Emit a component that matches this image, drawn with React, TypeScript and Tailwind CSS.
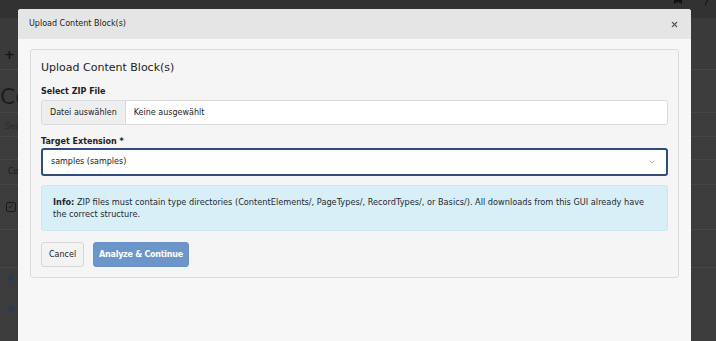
import { ChevronDown, X } from 'lucide-react';

function BackgroundPage() {
  return (
    <div className="flex h-full w-full flex-col bg-[#3c3c3c] text-[#1f1f1f]">
      <div className="flex h-[18px] shrink-0 items-start justify-end gap-[22px] bg-[#323232] pr-[8px]">
        <svg width="8" height="4" viewBox="0 0 8 4">
          <path d="M0 0h8v4L4 2 0 4z" fill="#111" />
        </svg>
        <svg width="4" height="5" viewBox="0 0 4 5">
          <path d="M3.5 0 1 5" stroke="#111" strokeWidth="1" />
        </svg>
      </div>
      <div className="flex h-[52px] shrink-0 items-center border-b border-[#474747] bg-[#3a3a3a] pl-[4px] pt-[22px]">
        <span className="text-[13px] font-bold text-[#151515]">+ A</span>
      </div>
      <div className="flex h-[43px] shrink-0 items-end border-b border-[#464646] pb-[2px]">
        <span className="text-[22px] leading-[26px] text-[#1c1c1c]">Co</span>
      </div>
      <div className="flex h-[24px] shrink-0 items-center border-b border-[#464646] pl-[5px] pt-[4px]">
        <span className="text-[8px] text-[#2a2a2a]">Sea</span>
      </div>
      <div className="h-[23px] shrink-0 border-b border-[#464646]" />
      <div className="flex h-[25px] shrink-0 items-center border-b border-[#464646] pl-[8px]">
        <span className="text-[8px] text-[#1c1c1c]">Co</span>
      </div>
      <div className="flex h-[45px] shrink-0 items-center border-b border-[#464646] pl-[6px]">
        <span className="flex h-[10px] w-[10px] items-center justify-center rounded-[2px] border border-[#1a1a1a] text-[7px] leading-none text-[#1a1a1a]">✓</span>
      </div>
      <div className="h-[38px] shrink-0 border-b border-[#464646]" />
      <div className="flex h-[20px] shrink-0 items-center pl-[8px]">
        <span className="h-[6px] w-[6px] bg-[#2c3a52]" />
      </div>
      <div className="flex h-[42px] shrink-0 items-center pl-[8px]">
        <span className="h-[6px] w-[6px] bg-[#2c3a52]" />
      </div>
    </div>
  );
}

function UploadModal() {
  return (
    <div className="absolute left-[18px] top-[9px] flex h-[360px] w-[673px] flex-col overflow-hidden rounded-t-[3px] bg-[#f7f7f7] text-[#222]">
      <div className="flex h-[30px] shrink-0 items-center justify-between bg-[#e5e5e5] pl-[11px] pr-[12px]">
        <span className="text-[8px]">Upload Content Block(s)</span>
        <X size={9} strokeWidth={3} className="text-[#555]" />
      </div>
      <div className="px-[12px] pt-[10px]">
        <div className="rounded-[3px] border border-[#dcdcdc] bg-[#f5f5f5] px-[10px] pb-[10px] pt-[9px]">
          <h2 className="text-[11px] leading-[18px] text-[#222]">Upload Content Block(s)</h2>

          <label className="mt-[10px] block text-[8px] font-bold leading-[10px]">Select ZIP File</label>
          <div className="mt-[3px] flex h-[25px] items-stretch overflow-hidden rounded-[3px] border border-[#dadada] bg-white text-[8px]">
            <span className="flex items-center border-r border-[#dadada] bg-[#eeeeee] px-[8px]">Datei auswählen</span>
            <span className="flex items-center pl-[8px]">Keine ausgewählt</span>
          </div>

          <label className="mt-[12px] block text-[8px] font-bold leading-[10px]">Target Extension *</label>
          <div className="mt-[1px] flex h-[28px] items-center justify-between rounded-[3px] border-2 border-[#2f4c7d] bg-white pl-[8px] pr-[10px] text-[8px]">
            <span>samples (samples)</span>
            <ChevronDown size={8} strokeWidth={1.5} className="text-[#777]" />
          </div>

          <div className="mt-[9px] rounded-[3px] border border-[#c9e6f1] bg-[#d8eff7] px-[11px] py-[10px] text-[8.2px] leading-[12px] text-[#1d2a33]">
            <span className="font-bold">Info:</span>{' '}
            ZIP files must contain type directories (ContentElements/, PageTypes/, RecordTypes/, or Basics/). All downloads from this GUI already have the correct structure.
          </div>

          <div className="mt-[11px] flex gap-[9px]">
            <button className="h-[25px] rounded-[3px] border border-[#d6d6d6] bg-[#f3f3f3] px-[7px] text-[8px] text-[#222]">
              Cancel
            </button>
            <button className="h-[25px] rounded-[3px] border border-[#6892c6] bg-[#6c96c9] px-[5px] text-[8px] font-bold tracking-[-0.25px] text-white">
              Analyze &amp; Continue
            </button>
          </div>
        </div>
      </div>
    </div>
  );
}

export default function App() {
  return (
    <div className="relative h-[341px] w-[716px] overflow-hidden" style={{ fontFamily: '"DejaVu Sans", Verdana, sans-serif' }}>
      <BackgroundPage />
      <UploadModal />
    </div>
  );
}
